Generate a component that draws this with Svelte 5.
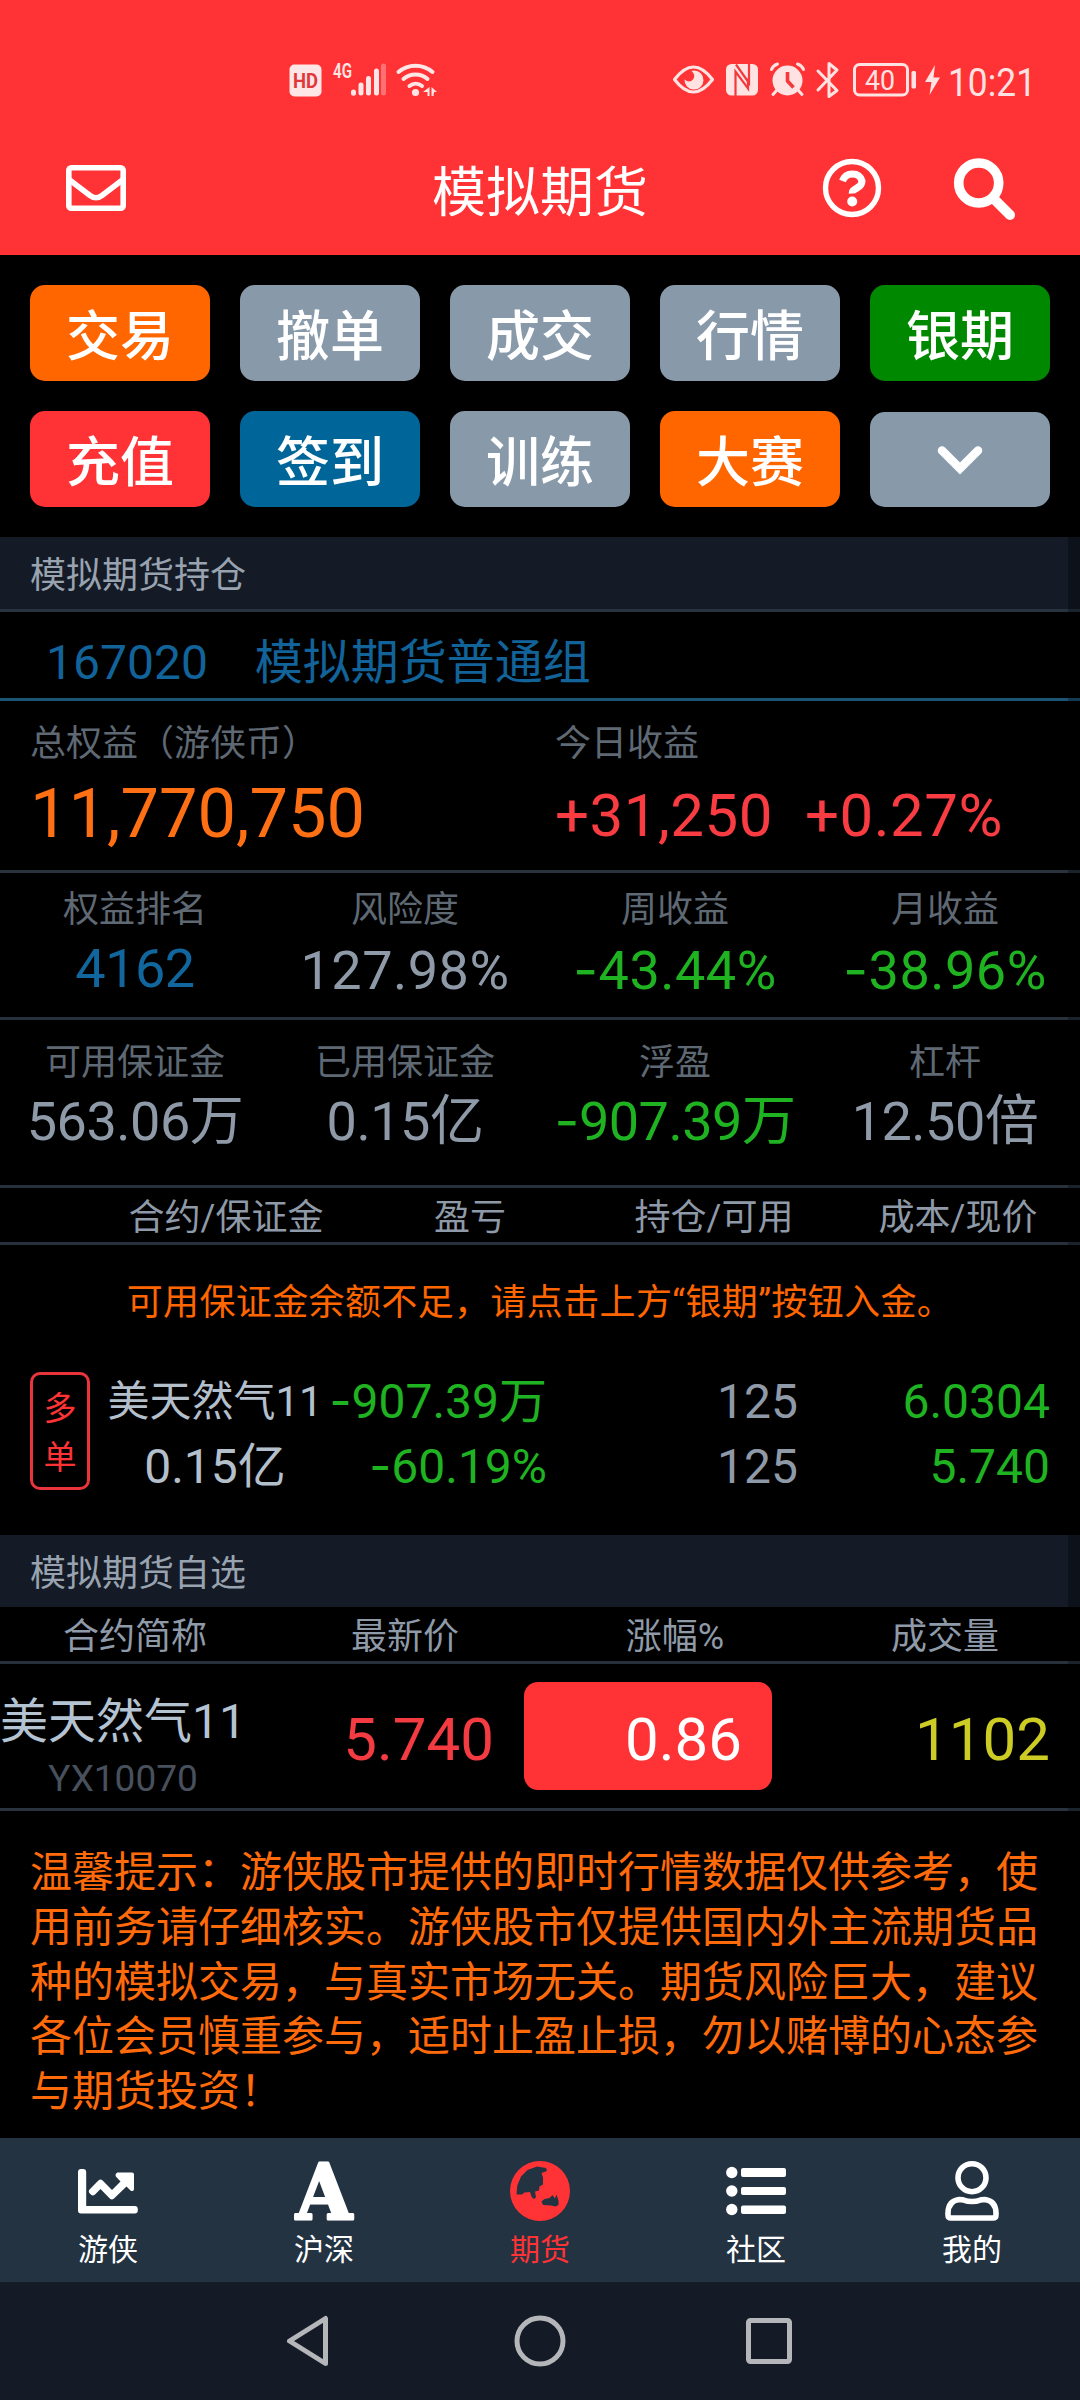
<script lang="ts">
	const actions = [
		{ label: '交易', tone: 'orange' },
		{ label: '撤单', tone: 'grey' },
		{ label: '成交', tone: 'grey' },
		{ label: '行情', tone: 'grey' },
		{ label: '银期', tone: 'green' },
		{ label: '充值', tone: 'red' },
		{ label: '签到', tone: 'blue' },
		{ label: '训练', tone: 'grey' },
		{ label: '大赛', tone: 'orange' }
	];

	const ranking = [
		{ label: '权益排名', value: '4162', tone: 'link' },
		{ label: '风险度', value: '127.98%', tone: '' },
		{ label: '周收益', value: '-43.44%', tone: 'down' },
		{ label: '月收益', value: '-38.96%', tone: 'down' }
	];

	const margin = [
		{ label: '可用保证金', value: '563.06万', tone: '' },
		{ label: '已用保证金', value: '0.15亿', tone: '' },
		{ label: '浮盈', value: '-907.39万', tone: 'down' },
		{ label: '杠杆', value: '12.50倍', tone: '' }
	];

	const tabs = ['游侠', '沪深', '期货', '社区', '我的'];
	let active = $state(2);
</script>

{#snippet num(text: string)}
	{#if text.startsWith('-')}<span class="minus">-</span>{text.slice(1)}{:else}{text}{/if}
{/snippet}

{#snippet metrics(items: typeof ranking)}
	{#each items as item}
		<div class="metric">
			<div class="label">{item.label}</div>
			<div class="value {item.tone}">{@render num(item.value)}</div>
		</div>
	{/each}
{/snippet}

<div class="app">
	<header>
		<div class="status">
			<svg viewBox="289 60 150 40" width="150" height="40">
				<rect x="289.5" y="64.5" width="32" height="32" rx="5" fill="#ffe6e6" />
				<text x="305.5" y="88" font-size="20" font-weight="700" text-anchor="middle" fill="#e0383b" textLength="25" lengthAdjust="spacingAndGlyphs">HD</text>
				<text x="333" y="78" font-size="20" font-weight="600" fill="#ffe6e6" textLength="19" lengthAdjust="spacingAndGlyphs">4G</text>
				<g stroke="#ffe6e6" stroke-width="5" stroke-linecap="round">
					<path d="M353.5 92v1.2M361 85v8M368.5 78.5v14.5M376.5 71v22" />
					<path d="M383.5 66v27" stroke-opacity=".35" />
				</g>
				<g fill="none" stroke="#ffe6e6" stroke-width="4" stroke-linecap="round">
					<path d="M398.5 72a26 26 0 0 1 34 0" />
					<path d="M403.5 79a18 18 0 0 1 24 0" />
					<path d="M409.5 86a10 10 0 0 1 12.5 0" />
				</g>
				<circle cx="415.5" cy="92.5" r="3.6" fill="#ffe6e6" />
				<path d="M429.5 87v9h-2v-4h-4.5zM431.5 87l5.5 5h-3l-.5 4h-2z" fill="#ffe6e6" />
			</svg>
			<svg viewBox="670 50 370 60" width="370" height="60">
				<g fill="#ffe3e3">
					<path d="M674.5 79.5q19-25 38 0q-19 25-38 0z" fill="none" stroke="#ffe3e3" stroke-width="3.2" stroke-linejoin="round" />
					<path d="M694 70.5a9.5 9.5 0 1 1-9.5 9q5 4 8.5 0t-1.5-8.5z" />
					<rect x="726" y="64" width="32" height="31.5" rx="5.5" />
					<path d="M735.5 96V71.5l12.5 17V78.5" fill="none" stroke="#f4383b" stroke-width="2.2" />
					<path d="M749 63.5V83l-13-18.5" fill="none" stroke="#f4383b" stroke-width="2.2" />
					<circle cx="787.5" cy="80.5" r="15" />
					<path d="M771.5 69.5q1.5-4 6-5.5M797.5 64q4.5 1.5 6 5.5M777 90l-4 4.5M798 90l4 4.5" fill="none" stroke="#ffe3e3" stroke-width="3" stroke-linecap="round" />
					<path d="M787.5 72v9l6 6.5" fill="none" stroke="#f4383b" stroke-width="3.6" />
					<path d="M818 71l19 19.5-8 6V63.5l8 6.5-19 20" fill="none" stroke="#ffe3e3" stroke-width="3" stroke-linejoin="round" stroke-linecap="round" />
					<rect x="854.5" y="64.5" width="53" height="30.5" rx="5" fill="none" stroke="#ffe3e3" stroke-width="3" />
					<rect x="911.5" y="71" width="4.5" height="17.5" rx="1.5" />
					<text x="880" y="90" font-size="28" text-anchor="middle" textLength="30" lengthAdjust="spacingAndGlyphs">40</text>
					<path d="M935 65l-10 17h6.5l-2 13 10.5-17.5h-6.5z" />
					<text x="948" y="95.5" font-size="38" textLength="88" lengthAdjust="spacingAndGlyphs">10:21</text>
				</g>
			</svg>
		</div>
		<div class="titlebar">
			<svg class="mail" viewBox="0 0 60 46" width="60" height="46" fill="none" stroke="#fff" stroke-width="5.6" stroke-linejoin="round">
				<rect x="2.8" y="2.8" width="54.4" height="40.4" rx="2.5" />
				<path d="M3 14.5l21 16q6 4.5 12 0l21-16" />
			</svg>
			<h1>模拟期货</h1>
			<svg class="help" viewBox="0 0 60 60" width="60" height="60">
				<circle cx="30" cy="30" r="26.5" fill="none" stroke="#fff" stroke-width="5.4" />
				<path d="M20.5 23q2.5-7 10-7t9.5 7q0 4.5-5 7t-4.8 5.5" fill="none" stroke="#fff" stroke-width="7" />
				<circle cx="30.2" cy="43.5" r="5" fill="#fff" />
			</svg>
			<svg class="search" viewBox="0 0 61 62" width="61" height="62" fill="none" stroke="#fff">
				<circle cx="24.7" cy="25" r="20" stroke-width="9.6" />
				<path d="M40 41l16 16" stroke-width="10" stroke-linecap="round" />
			</svg>
		</div>
	</header>

	<main>
		<div class="actions">
			{#each actions as action}
				<button class={action.tone}>{action.label}</button>
			{/each}
			<button class="grey more" aria-label="more">
				<svg viewBox="0 0 48 32" width="48" height="32"><path d="M6 6.5l18 18 18-18" fill="none" stroke="#fff" stroke-width="8.5" stroke-linecap="round" /></svg>
			</button>
		</div>

		<div class="sheet">
			<h2 class="ruled">模拟期货持仓</h2>
			<div class="account">
				<span>167020</span>
				<span>模拟期货普通组</span>
			</div>
			<div class="equity">
				<div>
					<div class="label">总权益（游侠币）</div>
					<div class="total">11,770,750</div>
				</div>
				<div>
					<div class="label">今日收益</div>
					<div class="today"><span>+31,250</span><span>+0.27%</span></div>
				</div>
			</div>
			<div class="metrics">{@render metrics(ranking)}</div>
			<div class="metrics margin">{@render metrics(margin)}</div>

			<div class="thead held">
				<span>合约/保证金</span>
				<span>盈亏</span>
				<span>持仓/可用</span>
				<span>成本/现价</span>
			</div>
			<p class="warning">可用保证金余额不足，请点击上方“银期”按钮入金。</p>
			<div class="position">
				<div class="side"><span>多</span><span>单</span></div>
				<div class="contract"><span class="name">美天然气11</span><span>0.15亿</span></div>
				<div class="down"><span>{@render num('-907.39万')}</span><span>{@render num('-60.19%')}</span></div>
				<div><span>125</span><span>125</span></div>
				<div class="down"><span>6.0304</span><span>5.740</span></div>
			</div>

			<h2>模拟期货自选</h2>
			<div class="thead watch">
				<span>合约简称</span>
				<span>最新价</span>
				<span>涨幅%</span>
				<span>成交量</span>
			</div>
			<div class="quote">
				<div class="symbol">
					<div class="name">美天然气11</div>
					<div class="code">YX10070</div>
				</div>
				<div class="last">5.740</div>
				<div class="change">0.86</div>
				<div class="volume">1102</div>
			</div>

			<p class="notice">温馨提示：游侠股市提供的即时行情数据仅供参考，使用前务请仔细核实。游侠股市仅提供国内外主流期货品种的模拟交易，与真实市场无关。期货风险巨大，建议各位会员慎重参与，适时止盈止损，勿以赌博的心态参与期货投资！</p>
			<div class="track"></div>
		</div>
	</main>

	<nav class="tabs">
		{#each tabs as tab, i}
			<button class:active={active === i} onclick={() => (active = i)}>
				<svg viewBox="0 0 60 60" width="60" height="60" fill="currentColor">
					{#if i === 0}
						<path d="M3.5 8h1.5a3.2 3.2 0 0 1 3.2 3.2V45h48.6a3 3 0 0 1 3 3v1.5a3 3 0 0 1-3 3H3a3 3 0 0 1-3-3V11a3.2 3.2 0 0 1 3.5-3z" />
						<path d="M39.5 11.5H54a2 2 0 0 1 2 2V28a2 2 0 0 1-3.5 1.4L48.5 25.5 36 37.5a3 3 0 0 1-4.2 0L22.5 28l-5.5 5.5a3 3 0 0 1-4.2 0l-1-1a3 3 0 0 1 0-4.2l8.6-8.7a3 3 0 0 1 4.2 0L34 29l8.5-8.5-4.2-4.5a2.7 2.7 0 0 1 1.2-4.5z" />
					{:else if i === 1}
						<text x="30" y="58" font-size="76" textLength="56" lengthAdjust="spacingAndGlyphs" text-anchor="middle" class="letter">A</text>
					{:else if i === 2}
						<path fill-rule="evenodd" d="M30 0a30 30 0 1 0 0 60a30 30 0 0 0 0-60zM6.5 33.5l.8-9 3.7-9 6.5-6.5 9.5-3.5 9 1.5 1 3-5.5 2 1.5 4.5v7l-3.5 2-.5 4-4 1 1 6-2.5 1.5-2-2.5-1.5-4.5-5.5.5-2.5 2zM31.5 40.5l3-2.5 5-1 3-3 2.5 3.5 1.5-4 2 6v4.5l-3 1.5-4.5-1-8-.5z" />
					{:else if i === 3}
						<circle cx="5.8" cy="11.5" r="5.7" /><circle cx="5.8" cy="30" r="5.7" /><circle cx="5.8" cy="48.5" r="5.7" />
						<rect x="15" y="7" width="45" height="9" rx="2" /><rect x="15" y="26" width="45" height="8" rx="2" /><rect x="15" y="44.5" width="45" height="8.5" rx="2" />
					{:else}
						<g fill="none" stroke="currentColor" stroke-width="5.6">
							<circle cx="30" cy="16.7" r="14" />
							<path d="M17 38.5q4 0 6 1t7 1 7-1 6-1q10.5 1.5 11 13v2.5q0 3-3 3H9q-3 0-3-3v-2.5q.5-11.5 11-13z" />
						</g>
					{/if}
				</svg>
				<span>{tab}</span>
			</button>
		{/each}
	</nav>

	<div class="system">
		<svg viewBox="0 0 44 52" width="44" height="52"><path d="M39.5 3.5v45L3.5 26z" /></svg>
		<svg viewBox="0 0 52 52" width="52" height="52"><circle cx="26" cy="26" r="23" /></svg>
		<svg viewBox="0 0 48 48" width="48" height="48"><rect x="3.5" y="3.5" width="41" height="41" rx="2" /></svg>
	</div>
</div>

<style>
	:global(body) {
		background: #000;
	}

	.app {
		width: 1080px;
		height: 2400px;
		display: flex;
		flex-direction: column;
		overflow: hidden;
		background: #000;
		color: #8f9aa8;
		font-family: Roboto, 'Noto Sans CJK SC', sans-serif;
		white-space: nowrap;
	}

	h1,
	h2,
	p {
		margin: 0;
		font-weight: 400;
	}

	button {
		border: 0;
		padding: 0;
		font-family: inherit;
		color: #fff;
	}

	svg {
		display: block;
		overflow: visible;
	}

	header {
		height: 255px;
		background: #ff3335;
	}

	.status {
		height: 110px;
		padding: 50px 40px 0 289px;
		box-sizing: border-box;
		display: flex;
		justify-content: space-between;
	}

	.status svg:first-child {
		margin-top: 10px;
	}

	.titlebar {
		display: grid;
		grid-template-columns: 367px 346px 109px 132px 1fr;
		padding-top: 47px;
		align-items: start;
	}

	.mail {
		margin: 8px 0 0 66px;
	}

	h1 {
		text-align: center;
		font-size: 54px;
		line-height: 74px;
		color: #fff;
	}

	.help {
		grid-column: 4;
		margin-top: 1px;
	}

	.search {
		margin-top: 1px;
	}

	.actions {
		height: 282px;
		box-sizing: border-box;
		padding: 30px;
		display: grid;
		grid-template-columns: repeat(5, 180px);
		grid-template-rows: 96px 96px;
		gap: 30px;
	}

	.actions button {
		height: 96px;
		border-radius: 15px;
		font-size: 54px;
		font-weight: 500;
		line-height: 106px;
	}

	.actions .more {
		height: 95px;
		align-self: end;
		display: flex;
		align-items: center;
		justify-content: center;
	}

	.orange { background: #ff6600; }
	.grey { background: #8899aa; }
	.green { background: #008800; }
	.red { background: #ff3335; }
	.blue { background: #006699; }

	.sheet {
		position: relative;
		height: 1601px;
	}

	/* scrollbar track laid over the right edge */
	.track {
		position: absolute;
		top: 0;
		right: 0;
		bottom: 0;
		width: 12px;
		background: rgba(0, 0, 0, 0.3);
	}

	h2 {
		height: 72px;
		padding-left: 30px;
		background: #141b26;
		color: #99a3b0;
		font-size: 36px;
		line-height: 79px;
	}

	.ruled {
		border-bottom: 3px solid #28333f;
	}

	.account {
		height: 86px;
		border-bottom: 3px solid #1c5474;
		padding-left: 46px;
		display: flex;
		gap: 47px;
		font-size: 48px;
		line-height: 101px;
		color: #11639a;
	}

	.equity {
		height: 169px;
		border-bottom: 3px solid #28333d;
		display: grid;
		grid-template-columns: 525px 1fr;
		padding: 0 0 0 30px;
	}

	.label {
		font-size: 36px;
		line-height: 48px;
		color: #5f6974;
	}

	.equity .label {
		padding-top: 19px;
	}

	.total {
		margin-top: 6px;
		font-size: 68.5px;
		line-height: 80px;
		color: #ff6f14;
	}

	.today {
		margin-top: 8px;
		display: flex;
		gap: 32px;
		font-size: 60px;
		line-height: 80px;
		letter-spacing: 0.5px;
		color: #f83c42;
	}

	.metrics {
		height: 131px;
		padding-top: 13px;
		border-bottom: 3px solid #28313b;
		display: grid;
		grid-template-columns: repeat(4, 270px);
	}

	.metrics.margin {
		height: 146px;
		padding-top: 19px;
	}

	.metric {
		display: flex;
		flex-direction: column;
		align-items: center;
	}

	.value {
		margin-top: 5px;
		font-size: 54px;
		line-height: 64px;
		letter-spacing: 0.5px;
	}

	.margin .value {
		margin-top: 3px;
		letter-spacing: -0.5px;
	}

	/* Inter has the wider hyphen */
	.minus {
		font-family: Inter, Roboto, sans-serif;
		line-height: 1;
	}

	.down { color: #1fb322; }

	.value.link {
		margin-top: 3px;
		letter-spacing: -0.5px;
		color: #11679d;
	}

	.thead {
		height: 54px;
		border-bottom: 3px solid #28313b;
		display: grid;
		text-align: center;
		font-size: 36px;
		line-height: 60px;
	}

	.held {
		grid-template-columns: repeat(4, 244px);
		padding-left: 104px;
	}

	.watch {
		grid-template-columns: repeat(4, 270px);
	}

	.warning {
		height: 48px;
		padding: 34px 0 43px;
		text-align: center;
		font-size: 36px;
		line-height: 48px;
		letter-spacing: 0.37px;
		color: #ff6600;
	}

	.position {
		height: 165px;
		padding-left: 30px;
		display: grid;
		grid-template-columns: 60px 250px 207px 251px 252px;
		align-items: start;
		font-size: 48px;
		line-height: 65px;
	}

	.position > div {
		margin-top: -1px;
		display: flex;
		flex-direction: column;
		align-items: flex-end;
	}

	.position .side {
		height: 118px;
		margin-top: 2px;
		padding-top: 9px;
		box-sizing: border-box;
		border: 3px solid #e8353b;
		border-radius: 10px;
		align-items: center;
		color: #ff3335;
		font-size: 33px;
		line-height: 49px;
	}

	.position .contract {
		align-items: center;
		color: #b4bfcc;
	}

	.contract .name {
		font-size: 42px;
	}

	.quote {
		height: 144px;
		border-bottom: 3px solid #28333f;
		display: grid;
		grid-template-columns: 243px 251px 30px 248px 278px;
		font-size: 60px;
		line-height: 152px;
		text-align: right;
	}

	.symbol {
		padding-top: 28px;
		text-align: center;
	}

	.symbol .name {
		font-size: 48px;
		line-height: 60px;
		color: #b4c3d2;
	}

	.code {
		padding-left: 3px;
		font-size: 37px;
		line-height: 54px;
		color: #47505c;
	}

	.last {
		color: #f43b42;
	}

	.change {
		grid-column: 4;
		height: 108px;
		margin-top: 18px;
		padding-right: 30px;
		border-radius: 14px;
		background: #ff3335;
		color: #fff;
		line-height: 116px;
	}

	.volume {
		color: #cccc24;
	}

	.notice {
		padding: 35px 30px 0;
		font-size: 42px;
		line-height: 54.75px;
		white-space: normal;
		word-break: break-all;
		color: #ff6a0a;
	}

	.tabs {
		height: 144px;
		background: #233342;
		display: grid;
		grid-template-columns: repeat(5, 1fr);
	}

	.tabs button {
		background: none;
		padding-top: 23px;
		display: flex;
		flex-direction: column;
		align-items: center;
		font-size: 30px;
		line-height: 40px;
	}

	.tabs span {
		margin-top: 9px;
	}

	.tabs .active {
		color: #ff3335;
	}

	.letter {
		font-family: 'DejaVu Serif', serif;
		font-weight: 700;
		stroke: currentColor;
		stroke-width: 3;
		stroke-linejoin: round;
	}

	.system {
		height: 118px;
		box-sizing: border-box;
		padding: 33px 0 0 286px;
		background: #141b26;
		display: grid;
		grid-template-columns: 228px 231px 1fr;
		align-items: start;
	}

	.system svg {
		fill: none;
		stroke: #b5b6ba;
		stroke-width: 5;
		stroke-linejoin: round;
	}

	.system svg:last-child {
		margin-top: 2px;
	}
</style>
